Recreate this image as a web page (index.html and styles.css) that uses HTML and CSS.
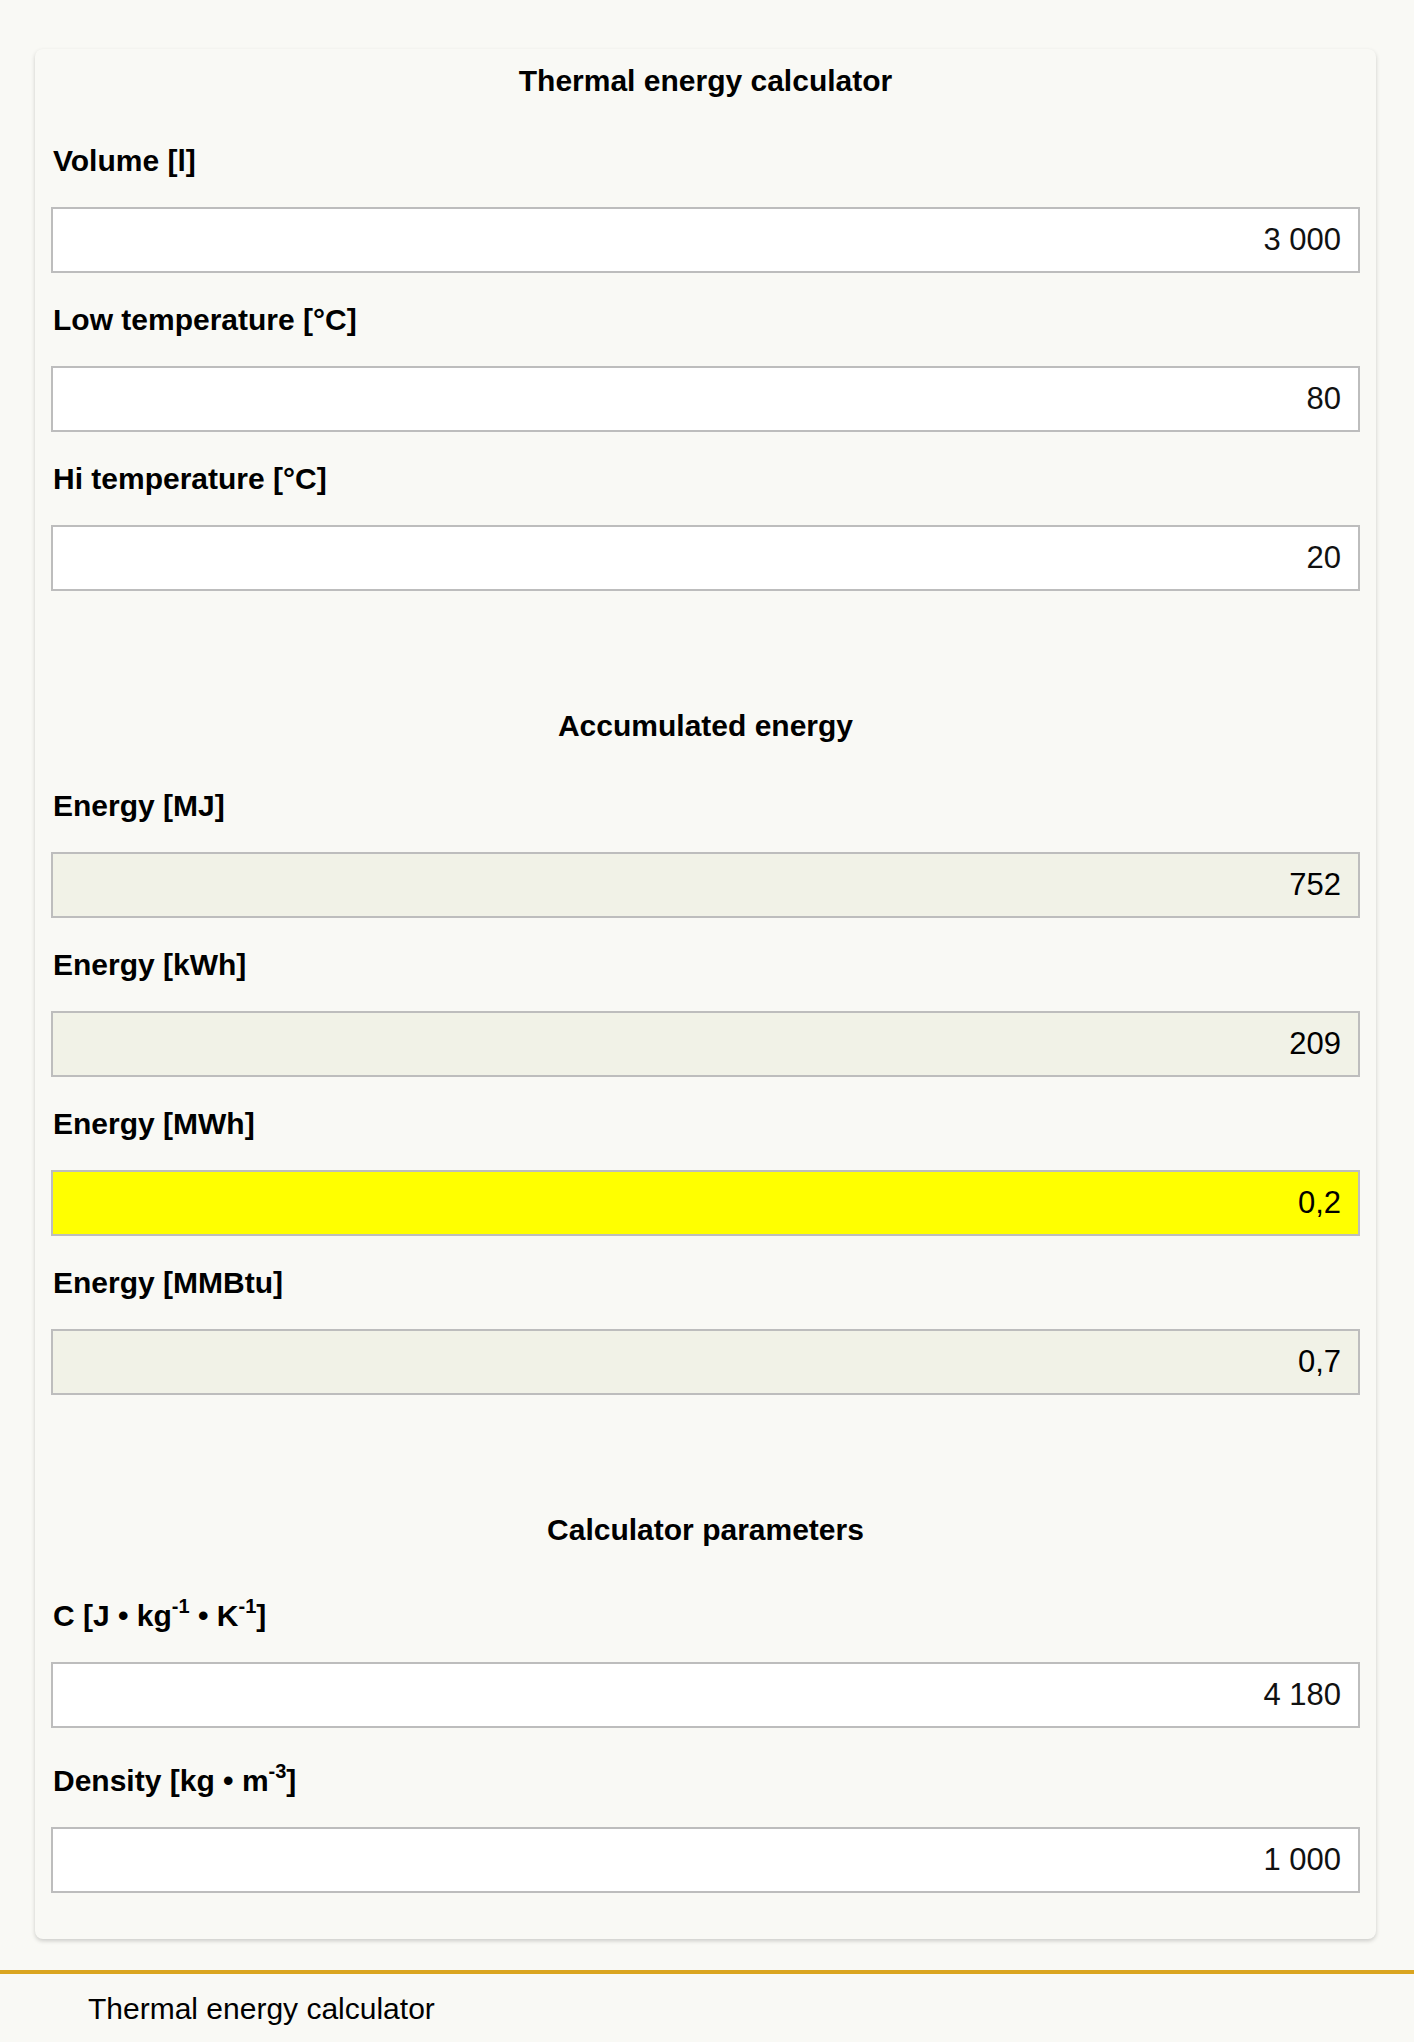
FILE: index.html
```html
<!DOCTYPE html>
<html>
  <head>
    <title>Thermal energy calculator</title>
    <link rel="stylesheet" href="styles.css">
  </head>
  <body>
    <div id="calc">
      <div class="section-title">Thermal energy calculator</div>

      <label class="field-label" for="volume">Volume [l]</label>
      <input class="field" id="volume" type="text" value="3 000">

      <label class="field-label" for="lowTemp">Low temperature [°C]</label>
      <input class="field" id="lowTemp" type="text" value="80">

      <label class="field-label" for="hiTemp">Hi temperature [°C]</label>
      <input class="field" id="hiTemp" type="text" value="20">

      <div class="section-title spaced">Accumulated energy</div>

      <label class="field-label" for="energyMJ">Energy [MJ]</label>
      <input class="field result" id="energyMJ" type="text" value="752" readonly>

      <label class="field-label" for="energyKWh">Energy [kWh]</label>
      <input class="field result" id="energyKWh" type="text" value="209" readonly>

      <label class="field-label" for="energyMWh">Energy [MWh]</label>
      <input class="field result highlight" id="energyMWh" type="text" value="0,2" readonly>

      <label class="field-label" for="energyMMBtu">Energy [MMBtu]</label>
      <input class="field result" id="energyMMBtu" type="text" value="0,7" readonly>

      <div class="section-title spaced">Calculator parameters</div>

      <label class="field-label" for="heatCap">C [J • kg<sup>-1</sup> • K<sup>-1</sup>]</label>
      <input class="field" id="heatCap" type="text" value="4 180">

      <label class="field-label" for="density">Density [kg • m<sup>-3</sup>]</label>
      <input class="field" id="density" type="text" value="1 000">
    </div>

    <div id="footer">Thermal energy calculator</div>
  </body>
</html>
```

FILE: styles.css
```css
body {
  margin: 0;
  background: #f9f9f5;
  font-family: "Liberation Sans", Arial, sans-serif;
  color: #000;
}

#calc {
  margin: 49px 38px 0 35px;
  padding: 15px 16px 16px;
  background: #f9f9f5;
  border-radius: 8px;
  box-shadow: 0 2px 4px rgba(0, 0, 0, 0.18);
}

.section-title {
  font-size: 30px;
  font-weight: bold;
  line-height: 34px;
  text-align: center;
  margin-bottom: 46px;
}

/* input margin collapses into this one */
.section-title.spaced {
  margin-top: 118px;
}

.field-label {
  display: block;
  padding-left: 2px;
  font-size: 30px;
  font-weight: bold;
  line-height: 34px;
  margin-bottom: 29px;
}

.field-label sup {
  font-size: 20px;
  line-height: 27px;
  vertical-align: 13px;
}

.field {
  display: block;
  width: 100%;
  height: 66px;
  box-sizing: border-box;
  margin: 0 0 30px;
  padding: 0 17px;
  border: 2px solid #bdbdbd;
  background: #fff;
  font-family: "Liberation Sans", Arial, sans-serif;
  font-size: 31px;
  color: #111;
  text-align: right;
  outline: none;
}

.result {
  background: #f1f2e7;
  color: #000;
}

.highlight {
  background: #ffff00;
}

#footer {
  margin-top: 31px;
  border-top: 4px solid #daa520;
  padding: 18px 0 20px 88px;
  font-size: 30px;
  line-height: 34px;
}
```
